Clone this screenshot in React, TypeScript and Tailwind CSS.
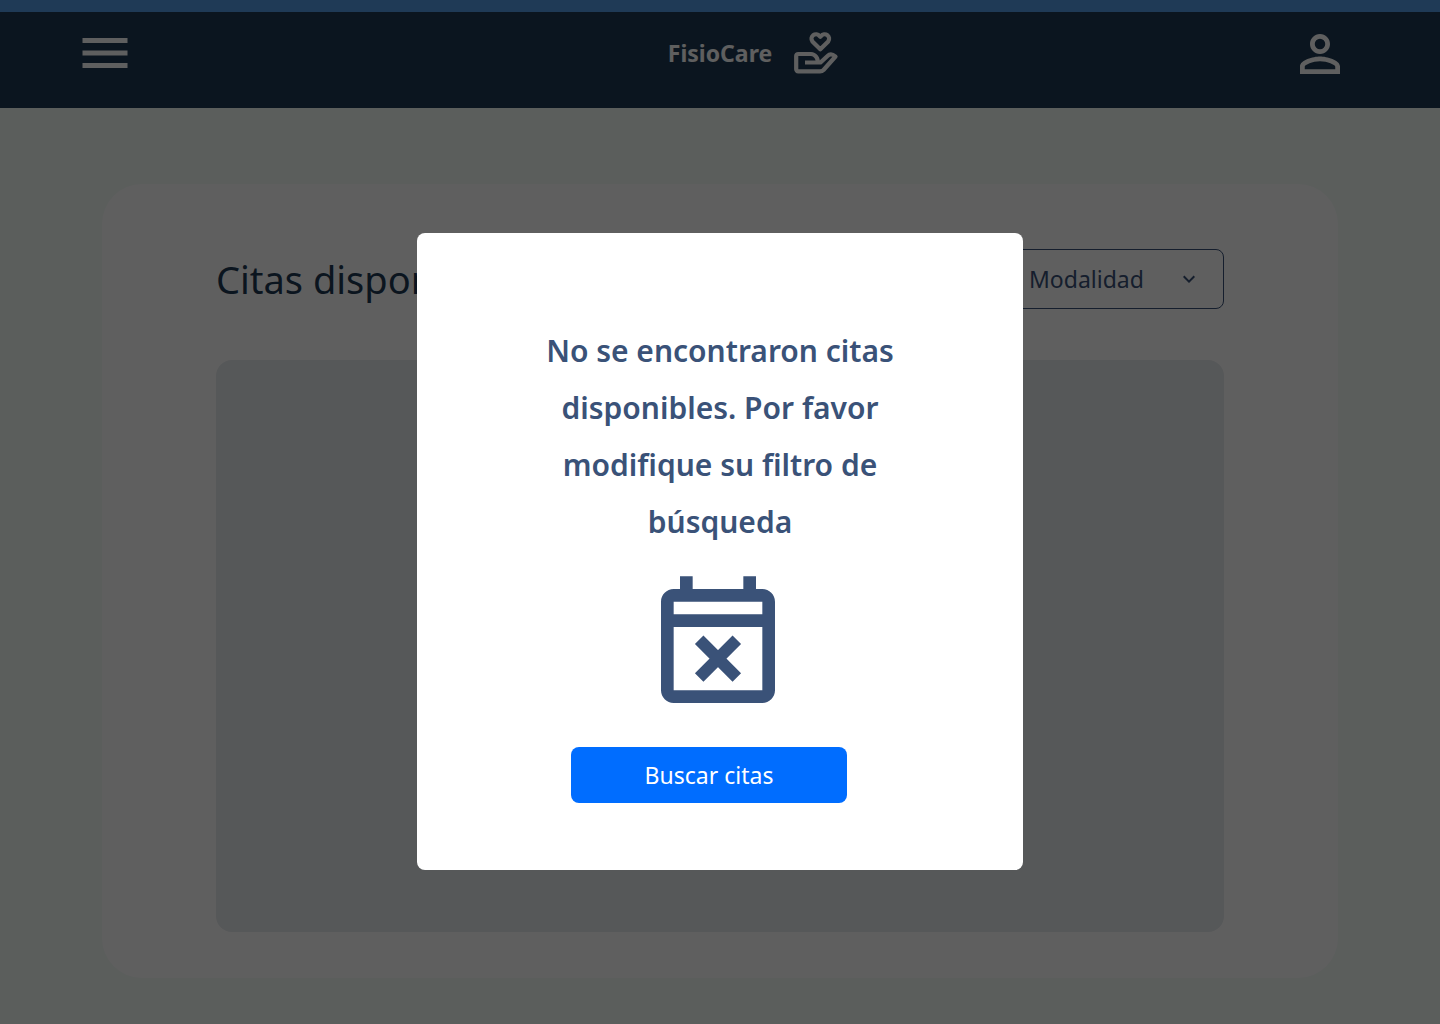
import { useState } from "react";
import { MdKeyboardArrowDown, MdMenu, MdPersonOutline } from "react-icons/md";

function HandHeartIcon() {
  return (
    <svg viewBox="0 0 44 42" className="h-[42px] w-11 overflow-visible" fill="none" stroke="currentColor" strokeWidth="4.200" strokeLinejoin="round" aria-hidden="true">
      <path d="M26.300 17.300L18.400 9.400A4.200 4.200 0 0 1 25.500 4L26.300 4.800L27.100 4A4.200 4.200 0 0 1 34.200 9.400Z" />
      <path d="M11 30.500H23.500C24.500 26.500 21 22 17 22H4.200A2 2 0 0 0 2.200 24V37.300A2 2 0 0 0 4.200 39.300H26C27.500 39.300 28.500 39 29.500 38L41.500 24.500C38.500 22 35.500 22 33.500 24L26.500 30.500H21" />
    </svg>
  );
}

function CalendarBusyIcon() {
  return (
    <svg viewBox="0 0 24 24" className="size-[152px] text-[#3a5278]" fill="currentColor" aria-hidden="true">
      <path fillRule="evenodd" d="M6 1h2v2h8V1h2v2h1c1.100 0 2 .9 2 2v14c0 1.100-.9 2-2 2H5c-1.100 0-2-.9-2-2V5c0-1.100.9-2 2-2h1V1ZM5 5v2h14V5H5Zm0 4v10h14V9H5Z" />
      <path d="M9.030 11.030l5.940 5.940m0-5.940l-5.940 5.940" fill="none" stroke="currentColor" strokeWidth="1.900" />
    </svg>
  );
}

function Header() {
  return (
    <header className="grid h-[108px] grid-cols-3 items-start border-t-12 border-[#539be7] bg-[#1e3a54] text-white">
      <button type="button" aria-label="Menú" className="mt-[11px] ml-[75px] justify-self-start">
        <MdMenu size={60} />
      </button>
      <a href="#inicio" className="mt-5 ml-[66px] flex items-center gap-[22px] justify-self-center">
        <span className="text-[23px] font-bold">FisioCare</span>
        <HandHeartIcon />
      </a>
      <button type="button" aria-label="Perfil" className="mt-3 mr-[90px] justify-self-end">
        <MdPersonOutline size={60} />
      </button>
    </header>
  );
}

export default function App() {
  const [open, setOpen] = useState(true);
  return (
    <div className="min-h-screen bg-[#f4fbf7] font-['Noto_Sans',sans-serif]">
      <Header />
      <main className="px-[102px] pt-[76px] pb-[46px]">
        <section className="rounded-[40px] bg-white px-[114px] pt-[65px] pb-[46px]">
          <div className="flex items-center justify-between">
            <h1 className="text-[38px] leading-[58px] text-[#1e3a54]">Citas disponibles</h1>
            <div className="grid items-center text-[#3a5278]">
              <select aria-label="Modalidad" className="col-start-1 row-start-1 h-[60px] w-[220px] appearance-none rounded-lg border border-[#3a5278] pr-16 pl-6 text-[23px]">
                <option>Modalidad</option>
              </select>
              <MdKeyboardArrowDown size={24} className="pointer-events-none col-start-1 row-start-1 mr-[23px] justify-self-end" />
            </div>
          </div>
          <div className="mt-[51px] h-[572px] rounded-2xl bg-[#e7ebef]" />
        </section>
      </main>
      {open && (
        <div className="fixed inset-0 flex items-start justify-center bg-black/[0.627] pt-[233px]">
          <div role="dialog" aria-modal="true" aria-labelledby="aviso" className="flex w-[606px] flex-col items-center rounded-lg bg-white px-28 pt-[89px] pb-[67px]">
            <h2 id="aviso" className="text-center text-[30px] leading-[57px] font-semibold text-[#3a5278]">
              No se encontraron citas<br />disponibles. Por favor<br />modifique su filtro de<br />búsqueda
            </h2>
            <div className="mt-5 mr-1">
              <CalendarBusyIcon />
            </div>
            <button type="button" onClick={() => setOpen(false)} className="mt-[25px] mr-[22px] h-14 w-[276px] rounded-lg bg-[#006dff] text-[23px] text-white">
              Buscar citas
            </button>
          </div>
        </div>
      )}
    </div>
  );
}
